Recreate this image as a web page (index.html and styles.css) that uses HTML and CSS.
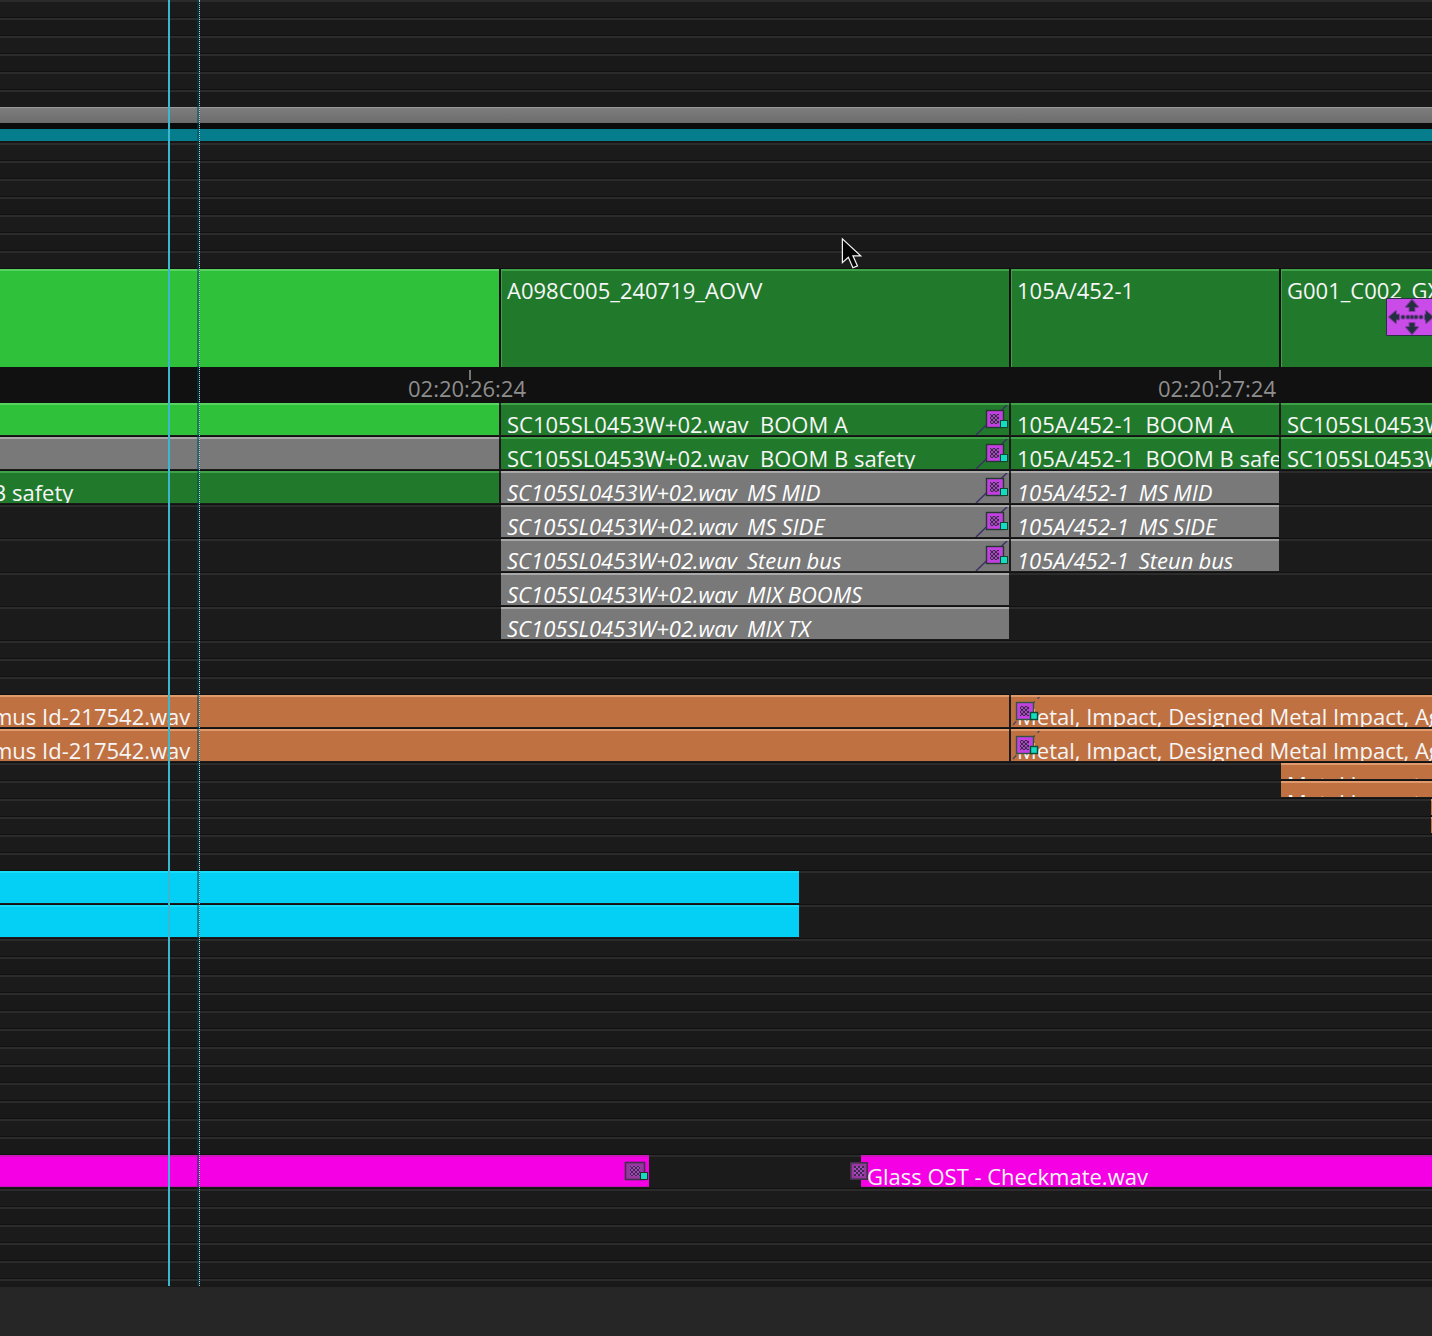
FILE: index.html
```html
<!DOCTYPE html>
<html lang="en">
<head>
  <meta charset="UTF-8" />
  <title>Timeline</title>
  <link rel="stylesheet" href="styles.css">
</head>
<body>
  <svg class="defs" width="0" height="0">
    <defs>
      <pattern id="checker" width="4" height="4" patternUnits="userSpaceOnUse">
        <rect width="4" height="4" fill="#a548c0"/>
        <rect width="2" height="2" fill="#3d2a48"/>
        <rect x="2" y="2" width="2" height="2" fill="#3d2a48"/>
      </pattern>
      <symbol id="fade-out" viewBox="0 0 34 32">
        <path d="M34 0 1 32" stroke="#3c2f68" stroke-width="1.4"/>
        <rect x="11.5" y="7.5" width="17" height="17" fill="#c23fe2" stroke="#24382e" stroke-width="1.4"/>
        <rect x="15" y="11" width="9" height="10" fill="url(#checker)"/>
        <rect x="25.5" y="17.5" width="7" height="7" fill="#14dcc0" stroke="#16452f"/>
      </symbol>
      <symbol id="fade-head" viewBox="0 0 34 32">
        <path d="M30 0 0 32" stroke="#4a4a5a" stroke-width="1.4" stroke-dasharray="5 4"/>
        <rect x="5.5" y="7.5" width="17" height="17" fill="#c23fe2" stroke="#35543f" stroke-width="1.4"/>
        <rect x="9" y="11" width="9" height="10" fill="url(#checker)"/>
        <rect x="19.5" y="17.5" width="7" height="7" fill="#14dcc0" stroke="#0f4a34" stroke-width="1.4"/>
      </symbol>
      <symbol id="fade-tail" viewBox="0 0 34 32">
        <rect x="10.5" y="7.5" width="19" height="17" fill="#96389f" stroke="#42304a" stroke-width="1.6"/>
        <rect x="15" y="11" width="10" height="10" fill="url(#checker)"/>
        <rect x="25.5" y="17.5" width="7" height="7" fill="#14dcc0" stroke="#2a2a2a"/>
      </symbol>
      <symbol id="fade-in" viewBox="0 0 18 18">
        <rect x=".8" y=".8" width="16.4" height="16.4" fill="#96389f" stroke="#42304a" stroke-width="1.6"/>
        <rect x="4" y="4" width="10" height="10" fill="url(#checker)"/>
      </symbol>
    </defs>
  </svg>

  <main class="timeline">
    <div class="lanes h107"></div>
    <div class="bar-gray"></div>
    <div class="bar-gap"></div>
    <div class="bar-teal"></div>
    <div class="bar-under"></div>
    <div class="lanes h126"></div>

    <div class="video">
      <div class="clip w499 lime"></div>
      <div class="clip w508 forest"><span>A098C005_240719_AOVV</span></div>
      <div class="clip w268 forest"><span>105A/452-1</span></div>
      <div class="clip grow forest"><span>G001_C002_GX</span></div>
    </div>

    <div class="ruler">
      <div class="mark">02:20:26:24</div>
      <div class="mark">02:20:27:24</div>
    </div>

    <div class="track">
      <div class="clip w499 lime"></div>
      <div class="clip w508 forest"><span>SC105SL0453W+02.wav&nbsp; BOOM A</span><svg class="fade fade-end"><use href="#fade-out"/></svg></div>
      <div class="clip w268 forest"><span>105A/452-1&nbsp; BOOM A</span></div>
      <div class="clip grow forest"><span>SC105SL0453W+02.wav</span></div>
    </div>
    <div class="track">
      <div class="clip w499 slate"></div>
      <div class="clip w508 forest"><span>SC105SL0453W+02.wav&nbsp; BOOM B safety</span><svg class="fade fade-end"><use href="#fade-out"/></svg></div>
      <div class="clip w268 forest"><span>105A/452-1&nbsp; BOOM B safety</span></div>
      <div class="clip grow forest"><span>SC105SL0453W+02.wav</span></div>
    </div>
    <div class="track">
      <div class="clip w499 forest"><span class="cut-b">B safety</span></div>
      <div class="clip w508 slate ital"><span>SC105SL0453W+02.wav&nbsp; MS MID</span><svg class="fade fade-end"><use href="#fade-out"/></svg></div>
      <div class="clip w268 slate ital"><span>105A/452-1&nbsp; MS MID</span></div>
    </div>
    <div class="track">
      <div class="hole w499"></div>
      <div class="clip w508 slate ital"><span>SC105SL0453W+02.wav&nbsp; MS SIDE</span><svg class="fade fade-end"><use href="#fade-out"/></svg></div>
      <div class="clip w268 slate ital"><span>105A/452-1&nbsp; MS SIDE</span></div>
    </div>
    <div class="track">
      <div class="hole w499"></div>
      <div class="clip w508 slate ital"><span>SC105SL0453W+02.wav&nbsp; Steun bus</span><svg class="fade fade-end"><use href="#fade-out"/></svg></div>
      <div class="clip w268 slate ital"><span>105A/452-1&nbsp; Steun bus</span></div>
    </div>
    <div class="track">
      <div class="hole w499"></div>
      <div class="clip w508 slate ital"><span>SC105SL0453W+02.wav&nbsp; MIX BOOMS</span></div>
    </div>
    <div class="track">
      <div class="hole w499"></div>
      <div class="clip w508 slate ital"><span>SC105SL0453W+02.wav&nbsp; MIX TX</span></div>
    </div>

    <div class="lanes h54"></div>

    <div class="track">
      <div class="clip w1009 rust"><span class="flush">mus Id-217542.wav</span></div>
      <div class="clip grow rust"><span>Metal, Impact, Designed Metal Impact, Ag</span><svg class="fade fade-start"><use href="#fade-head"/></svg></div>
    </div>
    <div class="track">
      <div class="clip w1009 rust"><span class="flush">mus Id-217542.wav</span></div>
      <div class="clip grow rust"><span>Metal, Impact, Designed Metal Impact, Ag</span><svg class="fade fade-start"><use href="#fade-head"/></svg></div>
    </div>

    <div class="lane-row">
      <div class="hole w1280"></div>
      <div class="clip grow rust"><span>Metal Impact</span></div>
    </div>
    <div class="lane-row">
      <div class="hole w1280"></div>
      <div class="clip grow rust"><span>Metal Impact</span></div>
    </div>
    <div class="lane-row">
      <div class="hole w1430"></div>
      <div class="clip grow rust"></div>
    </div>
    <div class="lane-row">
      <div class="hole w1430"></div>
      <div class="clip grow rust"></div>
    </div>
    <div class="lanes h36"></div>

    <div class="track">
      <div class="clip w799 cyan"></div>
    </div>
    <div class="track">
      <div class="clip w799 cyan"></div>
    </div>

    <div class="lanes h216"></div>

    <div class="track pink-track">
      <div class="clip w649 pink"><svg class="fade fade-end"><use href="#fade-tail"/></svg></div>
      <div class="hole w208"></div>
      <div class="clip grow pink"><span>Glass OST - Checkmate.wav</span></div>
      <svg class="fade-lead"><use href="#fade-in"/></svg>
    </div>

    <div class="lanes h98"></div>
    <div class="foot"></div>

    <div class="playhead"></div>
    <div class="playhead-ghost"></div>

    <svg class="handle" viewBox="0 0 46 38">
      <path d="M.5.5H47V37.5H.5Z" fill="#c94ce8" stroke="#2b2f45"/>
      <g fill="#243040" stroke="#8a3aa8" stroke-width="2" stroke-linejoin="round" paint-order="stroke">
        <path d="M26 2 32 9H28.5V13H23.5V9H20Z"/>
        <path d="M26 36 32 29H28.5V25H23.5V29H20Z"/>
        <path d="M3 19 10 13V16.5H13V21.5H10V25Z"/>
        <path d="M47 19 40 13V16.5H39V21.5H40V25Z"/>
        <circle cx="17" cy="19" r="1.6"/>
        <circle cx="22" cy="19" r="1.6"/>
        <circle cx="26" cy="19" r="1.6"/>
        <circle cx="30" cy="19" r="1.6"/>
        <circle cx="35" cy="19" r="1.6"/>
      </g>
    </svg>

    <svg class="pointer" viewBox="0 0 24 36">
      <path d="M1.5 1.5V27.5L8 21.5L13 33L18 31L13 20H21.5Z" fill="#040404" stroke="#f4f4f4" stroke-width="1.3"/>
    </svg>
  </main>
</body>
</html>
```

FILE: styles.css
```css
* {
  box-sizing: border-box;
}

html, body {
  margin: 0;
  background: #1c1c1c;
}

.defs {
  position: absolute;
}

.timeline {
  position: relative;
  width: 1432px;
  height: 1336px;
  overflow: hidden;
  font-family: "Open Sans", sans-serif;
  font-size: 22px;
  color: #f6f6f6;
}

/* empty 18px lanes */
.lanes, .lane-row {
  background: repeating-linear-gradient(
    #2b2b2b 0 2px, #1b1b1b 2px 17px, #111 17px 18px,
    #2b2b2b 18px 20px, #191919 20px 35px, #111 35px 36px
  );
}

.h36 { height: 36px; }
.h54 { height: 54px; }
.h98 { height: 98px; }
.h107 { height: 107px; }
.h126 { height: 126px; }
.h216 { height: 216px; }

.bar-gray {
  height: 16px;
  background: linear-gradient(#999 0 1px, #7d7d7d 1px, #6c6c6c);
}

.bar-gap {
  height: 6px;
  background: #0b0b0b;
}

.bar-teal {
  height: 12px;
  background: #067d8c;
}

.bar-under {
  height: 2px;
  background: #161616;
}

.video {
  display: flex;
  height: 98px;
  gap: 2px;
  background: #0d0d0d;
}

.video .clip {
  height: 98px;
}

.video .clip span {
  padding-top: 5px;
}

.video .forest {
  border-left: 1px solid #3fa048;
}

.video .forest span {
  padding-left: 5px;
}

.ruler {
  display: flex;
  gap: 630px;
  height: 36px;
  padding-left: 408px;
  background: #111;
  color: #8e8e8e;
}

.mark {
  position: relative;
  width: 120px;
  padding-top: 7px;
  line-height: 29px;
  white-space: nowrap;
}

.mark::before {
  content: "";
  position: absolute;
  left: 61px;
  top: 3px;
  width: 2px;
  height: 10px;
  background: #777;
}

.track {
  position: relative;
  display: flex;
  gap: 2px;
  height: 34px;
  background: linear-gradient(#2b2b2b 0 2px, #1b1b1b 2px 33px, #111 33px);
}

.lane-row {
  display: flex;
  gap: 1px;
  height: 18px;
}

.lane-row .clip {
  height: 16px;
}

.lane-row .hole {
  height: 16px;
}

.clip {
  position: relative;
  height: 32px;
  flex: none;
  overflow: hidden;
  white-space: nowrap;
  border-top: 2px solid rgba(255, 255, 255, 0.22);
}

.clip span {
  display: block;
  padding: 5px 0 0 6px;
  line-height: 29px;
}

.grow { flex: 1; }
.hole { flex: none; }
.w208 { width: 208px; }
.w268 { width: 268px; }
.w499 { width: 499px; }
.w508 { width: 508px; }
.w649 { width: 649px; }
.w799 { width: 799px; }
.w1009 { width: 1009px; }
.w1280 { width: 1280px; }
.w1430 { width: 1430px; }

.lime { background: #2fc13a; border-top-color: #57d45f; }
.forest { background: #217a2c; border-top-color: #3ea346; }
.slate { background: #797979; border-top-color: #a8a8a8; }
.rust { background: #c07142; border-top-color: #e09a6c; }
.cyan { background: #04d0f5; border-top-color: #18dcf8; }
.pink { background: #f500e5; border-top-color: #c818b8; border-bottom: 1px solid #c810b8; }

.ital {
  font-style: italic;
  color: #fff;
  word-spacing: -0.7px;
}

.cut-b {
  margin-left: -14px;
}

.clip .flush {
  padding-left: 0;
  margin-left: -8px;
}

.fade {
  position: absolute;
  top: -2px;
  width: 34px;
  height: 32px;
}

.fade-end {
  right: 0;
}

.fade-start {
  left: 0;
}

.fade-lead {
  position: absolute;
  left: 850px;
  top: 7px;
  width: 18px;
  height: 18px;
}

.foot {
  height: 49px;
  background: #262626;
}

.playhead {
  position: absolute;
  left: 168px;
  top: 0;
  width: 2px;
  height: 1286px;
  background: #3cb7d0;
}

.playhead-ghost {
  position: absolute;
  left: 197px;
  top: 0;
  width: 3px;
  height: 1286px;
  border-right: 1px dotted #9fd6dc;
  background: rgba(4, 70, 84, 0.5);
}

.handle {
  position: absolute;
  left: 1386px;
  top: 298px;
  width: 46px;
  height: 38px;
}

.pointer {
  position: absolute;
  left: 841px;
  top: 236px;
  width: 22px;
  height: 36px;
}
```
